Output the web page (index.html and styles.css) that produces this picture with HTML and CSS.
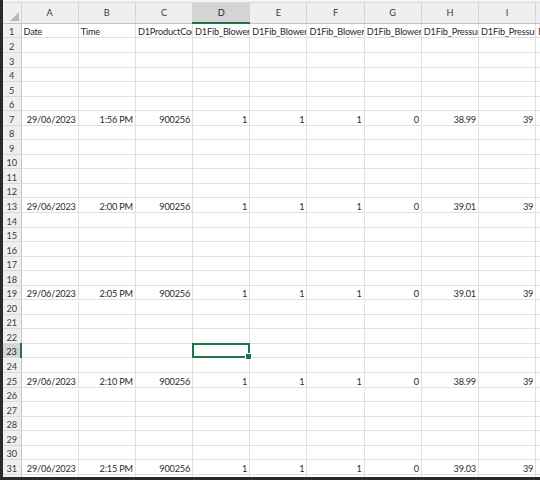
FILE: index.html
```html
<!DOCTYPE html>
<html>
<head>
<meta charset="utf-8">
<link rel="stylesheet" href="styles.css">
</head>
<body>
<div class="window">
  <div class="sheet">
    <div class="topbar"></div>
    <table class="grid">
      <colgroup>
        <col class="c-rh">
        <col class="c"><col class="c"><col class="c"><col class="c"><col class="c">
        <col class="c"><col class="c"><col class="c"><col class="c"><col class="c">
      </colgroup>
      <thead>
        <tr>
          <th class="corner"><span class="tri"></span></th>
          <th>A</th><th>B</th><th>C</th><th class="sel-col">D</th><th>E</th><th>F</th><th>G</th><th>H</th><th>I</th><th>J</th>
        </tr>
      </thead>
      <tbody>
        <tr><th>1</th><td>Date</td><td>Time</td><td>D1ProductCode</td><td>D1Fib_Blower1_Run</td><td>D1Fib_Blower2_Run</td><td>D1Fib_Blower3_Run</td><td>D1Fib_Blower4_Run</td><td>D1Fib_Pressure1</td><td>D1Fib_Pressure2</td><td>D1Fib_Temp</td></tr>
        <tr><th>2</th><td></td><td></td><td></td><td></td><td></td><td></td><td></td><td></td><td></td><td></td></tr>
        <tr><th>3</th><td></td><td></td><td></td><td></td><td></td><td></td><td></td><td></td><td></td><td></td></tr>
        <tr><th>4</th><td></td><td></td><td></td><td></td><td></td><td></td><td></td><td></td><td></td><td></td></tr>
        <tr><th>5</th><td></td><td></td><td></td><td></td><td></td><td></td><td></td><td></td><td></td><td></td></tr>
        <tr><th>6</th><td></td><td></td><td></td><td></td><td></td><td></td><td></td><td></td><td></td><td></td></tr>
        <tr><th>7</th><td class="n">29/06/2023</td><td class="n">1:56 PM</td><td class="n">900256</td><td class="n">1</td><td class="n">1</td><td class="n">1</td><td class="n">0</td><td class="n">38.99</td><td class="n">39</td><td></td></tr>
        <tr><th>8</th><td></td><td></td><td></td><td></td><td></td><td></td><td></td><td></td><td></td><td></td></tr>
        <tr><th>9</th><td></td><td></td><td></td><td></td><td></td><td></td><td></td><td></td><td></td><td></td></tr>
        <tr><th>10</th><td></td><td></td><td></td><td></td><td></td><td></td><td></td><td></td><td></td><td></td></tr>
        <tr><th>11</th><td></td><td></td><td></td><td></td><td></td><td></td><td></td><td></td><td></td><td></td></tr>
        <tr><th>12</th><td></td><td></td><td></td><td></td><td></td><td></td><td></td><td></td><td></td><td></td></tr>
        <tr><th>13</th><td class="n">29/06/2023</td><td class="n">2:00 PM</td><td class="n">900256</td><td class="n">1</td><td class="n">1</td><td class="n">1</td><td class="n">0</td><td class="n">39.01</td><td class="n">39</td><td></td></tr>
        <tr><th>14</th><td></td><td></td><td></td><td></td><td></td><td></td><td></td><td></td><td></td><td></td></tr>
        <tr><th>15</th><td></td><td></td><td></td><td></td><td></td><td></td><td></td><td></td><td></td><td></td></tr>
        <tr><th>16</th><td></td><td></td><td></td><td></td><td></td><td></td><td></td><td></td><td></td><td></td></tr>
        <tr><th>17</th><td></td><td></td><td></td><td></td><td></td><td></td><td></td><td></td><td></td><td></td></tr>
        <tr><th>18</th><td></td><td></td><td></td><td></td><td></td><td></td><td></td><td></td><td></td><td></td></tr>
        <tr><th>19</th><td class="n">29/06/2023</td><td class="n">2:05 PM</td><td class="n">900256</td><td class="n">1</td><td class="n">1</td><td class="n">1</td><td class="n">0</td><td class="n">39.01</td><td class="n">39</td><td></td></tr>
        <tr><th>20</th><td></td><td></td><td></td><td></td><td></td><td></td><td></td><td></td><td></td><td></td></tr>
        <tr><th>21</th><td></td><td></td><td></td><td></td><td></td><td></td><td></td><td></td><td></td><td></td></tr>
        <tr><th>22</th><td></td><td></td><td></td><td></td><td></td><td></td><td></td><td></td><td></td><td></td></tr>
        <tr><th class="sel-row">23</th><td></td><td></td><td></td><td class="active"></td><td></td><td></td><td></td><td></td><td></td><td></td></tr>
        <tr><th>24</th><td></td><td></td><td></td><td></td><td></td><td></td><td></td><td></td><td></td><td></td></tr>
        <tr><th>25</th><td class="n">29/06/2023</td><td class="n">2:10 PM</td><td class="n">900256</td><td class="n">1</td><td class="n">1</td><td class="n">1</td><td class="n">0</td><td class="n">38.99</td><td class="n">39</td><td></td></tr>
        <tr><th>26</th><td></td><td></td><td></td><td></td><td></td><td></td><td></td><td></td><td></td><td></td></tr>
        <tr><th>27</th><td></td><td></td><td></td><td></td><td></td><td></td><td></td><td></td><td></td><td></td></tr>
        <tr><th>28</th><td></td><td></td><td></td><td></td><td></td><td></td><td></td><td></td><td></td><td></td></tr>
        <tr><th>29</th><td></td><td></td><td></td><td></td><td></td><td></td><td></td><td></td><td></td><td></td></tr>
        <tr><th>30</th><td></td><td></td><td></td><td></td><td></td><td></td><td></td><td></td><td></td><td></td></tr>
        <tr><th>31</th><td class="n">29/06/2023</td><td class="n">2:15 PM</td><td class="n">900256</td><td class="n">1</td><td class="n">1</td><td class="n">1</td><td class="n">0</td><td class="n">39.03</td><td class="n">39</td><td></td></tr>
        <tr><th>32</th><td></td><td></td><td></td><td></td><td></td><td></td><td></td><td></td><td></td><td></td></tr>
      </tbody>
    </table>
  </div>
  <div class="bottombar"></div>
</div>
</body>
</html>
```
FILE: styles.css
```css
html, body {
  margin: 0;
  padding: 0;
  background: #ffffff;
}

.window {
  width: 540px;
  height: 480px;
  overflow: hidden;
  display: flex;
  flex-direction: column;
}

.sheet {
  flex: 1;
  min-height: 0;
  overflow: hidden;
  border-left: 3px solid #2a2a2a;
  background: #ffffff;
}

.bottombar {
  height: 3px;
  background: #2a2a2a;
}

.topbar {
  height: 2px;
  background: #f3f3f3;
}

.grid {
  border-collapse: collapse;
  table-layout: fixed;
  width: 590px;
  font-family: Lato, "Open Sans", sans-serif;
  font-size: 9.2px;
  letter-spacing: -0.2px;
  color: #2b2b2b;
}

.c-rh { width: 18px; }
.c { width: 57.2px; }

.grid thead th {
  height: 19.4px;
  padding: 0;
  background: #efefef;
  color: #3a3a3a;
  font-weight: normal;
  text-align: center;
  letter-spacing: 0;
  border-top: 1px solid #dcdcdc;
  border-right: 1px solid #d4d4d4;
  border-bottom: 1px solid #c4c4c4;
  vertical-align: middle;
}

.grid thead th.sel-col {
  background: #d4d4d4;
  border-bottom: 2px solid #217346;
  color: #262626;
}

.grid thead th.corner {
  position: relative;
}

.tri {
  position: absolute;
  right: 2px;
  bottom: 2px;
  width: 0;
  height: 0;
  border-left: 9px solid transparent;
  border-bottom: 9px solid #b8b8b8;
}

.grid tbody tr {
  height: 14.55px;
}

.grid tbody th {
  padding: 0;
  background: #efefef;
  color: #3a3a3a;
  font-weight: normal;
  text-align: center;
  vertical-align: bottom;
  line-height: 10px;
  letter-spacing: 0;
  border-right: 1px solid #c4c4c4;
  border-bottom: 1px solid #d8d8d8;
}

.grid tbody th.sel-row {
  background: #d4d4d4;
  border-right: 2px solid #217346;
  color: #262626;
}

.grid td {
  padding: 0 2px;
  white-space: nowrap;
  overflow: hidden;
  text-overflow: clip;
  vertical-align: bottom;
  line-height: 10px;
  border-right: 1px solid #e1e1e1;
  border-bottom: 1px solid #e1e1e1;
}

.grid td.n {
  text-align: right;
}

.grid td.active {
  position: relative;
  overflow: visible;
}

.grid td.active::after {
  content: "";
  position: absolute;
  left: -1px;
  top: -1px;
  right: -1px;
  bottom: -1px;
  border: 2px solid #217346;
}

.grid td.active::before {
  content: "";
  position: absolute;
  right: -3px;
  bottom: -3px;
  width: 5px;
  height: 5px;
  background: #217346;
  border: 1px solid #ffffff;
  z-index: 2;
}
```
